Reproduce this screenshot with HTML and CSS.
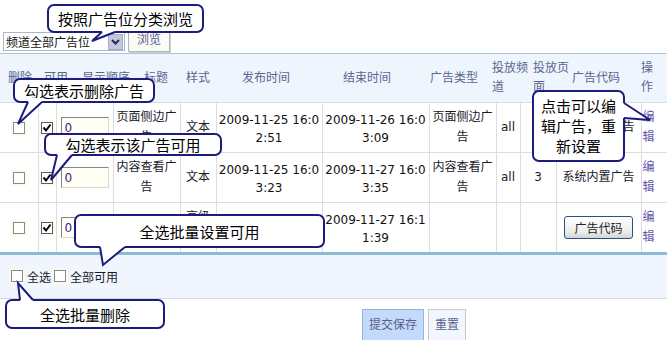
FILE: index.html
```html
<!DOCTYPE html>
<html lang="zh-CN">
<head>
    <meta charset="UTF-8">
    <meta name="viewport" content="width=device-width, initial-scale=1.0">
    <title>广告管理</title>
    <link rel="stylesheet" href="styles.css">
</head>
<body>
<div class="page">

    <!-- Filtro por posición -->
    <div class="toolbar">
        <div class="select">
            <span class="select-text">频道全部广告位</span>
            <span class="select-arrow"><svg width="9" height="6" viewBox="0 0 9 6"><polyline points="1,1 4.5,4.5 8,1" fill="none" stroke="#2a2a4a" stroke-width="2"/></svg></span>
        </div>
        <button class="btn-browse">浏览</button>
    </div>

    <!-- Cabecera de la lista -->
    <div class="list-head">
        <div>删除</div>
        <div>可用</div>
        <div>显示顺序</div>
        <div>标题</div>
        <div>样式</div>
        <div>发布时间</div>
        <div>结束时间</div>
        <div>广告类型</div>
        <div class="h-chan">投放频道</div>
        <div class="h-page">投放页面</div>
        <div>广告代码</div>
        <div class="h-op">操作</div>
    </div>

    <table class="list">
        <colgroup>
            <col style="width:38px"><col style="width:18px"><col style="width:57px"><col style="width:67px">
            <col style="width:36px"><col style="width:106px"><col style="width:107px"><col style="width:67px">
            <col style="width:24px"><col style="width:36px"><col style="width:85px"><col style="width:26px">
        </colgroup>
        <tr>
            <td><span class="cb"></span></td>
            <td><span class="cb checked"><svg width="10" height="10" viewBox="0 0 10 10"><polyline points="1.5,4.5 4,7.5 8.5,1.5" fill="none" stroke="#000" stroke-width="2"/></svg></span></td>
            <td><input class="order" value="0"></td>
            <td>页面侧边广告</td>
            <td class="style">文本</td>
            <td class="date">2009-11-25 16:02:51</td>
            <td class="date">2009-11-26 16:03:09</td>
            <td>页面侧边广告</td>
            <td>all</td>
            <td>2</td>
            <td>系统内置广告</td>
            <td class="op"><a href="#">编辑</a></td>
        </tr>
        <tr class="row2">
            <td><span class="cb"></span></td>
            <td><span class="cb checked"><svg width="10" height="10" viewBox="0 0 10 10"><polyline points="1.5,4.5 4,7.5 8.5,1.5" fill="none" stroke="#000" stroke-width="2"/></svg></span></td>
            <td><input class="order" value="0"></td>
            <td>内容查看广告</td>
            <td class="style">文本</td>
            <td class="date">2009-11-25 16:03:23</td>
            <td class="date">2009-11-27 16:03:35</td>
            <td>内容查看广告</td>
            <td>all</td>
            <td>3</td>
            <td>系统内置广告</td>
            <td class="op"><a href="#">编辑</a></td>
        </tr>
        <tr>
            <td><span class="cb"></span></td>
            <td><span class="cb checked"><svg width="10" height="10" viewBox="0 0 10 10"><polyline points="1.5,4.5 4,7.5 8.5,1.5" fill="none" stroke="#000" stroke-width="2"/></svg></span></td>
            <td><input class="order" value="0"></td>
            <td>首页广告</td>
            <td class="style">高级最新</td>
            <td class="date">2009-11-25 16:11:02</td>
            <td class="date">2009-11-27 16:11:39</td>
            <td></td>
            <td></td>
            <td></td>
            <td><button class="btn-code">广告代码</button></td>
            <td class="op"><a href="#">编辑</a></td>
        </tr>
    </table>

    <!-- Acciones en lote -->
    <div class="batch">
        <span class="cb"></span><span class="batch-label">全选</span>
        <span class="cb"></span><span class="batch-label">全部可用</span>
    </div>

    <div class="actions">
        <button class="btn-save">提交保存</button>
        <button class="btn-reset">重置</button>
    </div>

    <!-- Globos de ayuda -->
    <div class="tip tip-filter">按照广告位分类浏览
        <svg class="tail" width="1" height="1"><polygon points="55,24 55,28 45,37 68,28 68,24" fill="#fff"/><polyline points="55,28 45,37 68,28" fill="none" stroke="#1c1c7c" stroke-width="2"/></svg>
    </div>
    <div class="tip tip-del">勾选表示删除广告
        <svg class="tail" width="1" height="1"><polygon points="15,20 15,24 5,46 29,24 29,20" fill="#fff"/><polyline points="15,24 5,46 29,24" fill="none" stroke="#1c1c7c" stroke-width="2"/></svg>
    </div>
    <div class="tip tip-enable">勾选表示该广告可用
        <svg class="tail" width="1" height="1"><polygon points="13,18 13,22 7,47 28,22 28,18" fill="#fff"/><polyline points="13,22 7,47 28,22" fill="none" stroke="#1c1c7c" stroke-width="2"/></svg>
    </div>
    <div class="tip tip-allenable">全选批量设置可用
        <svg class="tail" width="1" height="1"><polygon points="26,29 26,33 29,51 51,33 51,29" fill="#fff"/><polyline points="26,33 29,51 51,33" fill="none" stroke="#1c1c7c" stroke-width="2"/></svg>
    </div>
    <div class="tip tip-alldel">全选批量删除
        <svg class="tail" width="1" height="1"><polygon points="15,5 15,1 13,-16 28,1 28,5" fill="#fff"/><polyline points="15,1 13,-16 28,1" fill="none" stroke="#1c1c7c" stroke-width="2"/></svg>
    </div>
    <div class="tip tip-edit">点击可以编辑广告，重新设置
        <svg class="tail" width="1" height="1"><polygon points="88,13 92,13 118,30 92,28 88,28" fill="#fff"/><polyline points="92,13 118,30 92,28" fill="none" stroke="#1c1c7c" stroke-width="2"/></svg>
    </div>

</div>
</body>
</html>
```

FILE: styles.css
```css
/* Estilos generales */
body, html {
    margin: 0;
    padding: 0;
    background: #fff;
}

.page {
    position: relative;
    width: 667px;
    height: 340px;
    overflow: hidden;
    font-family: "DejaVu Sans", "Noto Sans CJK SC", sans-serif;
    font-size: 12px;
    color: #222;
}

/* Barra superior */
.toolbar {
    display: flex;
    align-items: flex-start;
    height: 53px;
    padding: 32px 0 0 3px;
    box-sizing: border-box;
}

.select {
    display: flex;
    align-items: center;
    width: 122px;
    height: 19px;
    box-sizing: border-box;
    border: 1px solid #a8b8cc;
    background: #fff;
}

.select-text {
    flex: 1;
    padding-left: 2px;
    color: #111;
    font-family: "Noto Sans CJK SC", sans-serif;
    line-height: 17px;
}

.select-arrow {
    display: flex;
    align-items: center;
    justify-content: center;
    width: 15px;
    height: 16px;
    margin-right: 1px;
    background: #c3c7de;
    border: 1px solid #a6acc8;
    box-sizing: border-box;
}

.btn-browse {
    margin: -3px 0 0 3px;
    width: 42px;
    height: 23px;
    padding: 0 0 6px;
    border: 1px solid #b5b5b5;
    background: #fbfbf6;
    box-shadow: 1px 1px 0 #cfcfcf;
    font-family: "Noto Sans CJK SC", sans-serif;
    font-size: 12px;
    color: #5a5f90;
}

/* Cabecera */
.list-head {
    display: grid;
    grid-template-columns: 40px 32px 68px 32px 52px 84px 118px 56px 49px 39px 52px 45px;
    align-items: center;
    height: 50px;
    box-sizing: border-box;
    border-top: 1px solid #a9c6dc;
    border-bottom: 1px solid #d9dde8;
    background: #eff5fd;
    color: #5a6690;
    line-height: 19px;
    text-align: center;
}

.list-head .h-chan {
    text-align: left;
    padding-left: 10px;
}

.list-head .h-page {
    text-align: left;
    padding-left: 2px;
}

.list-head .h-op {
    text-align: left;
    padding: 0 12px 0 19px;
}

/* Tabla */
.list {
    width: 667px;
    table-layout: fixed;
    border-collapse: collapse;
    border-style: hidden;
}

.list td {
    height: 48.5px;
    padding: 0 2px;
    border: 1px solid #dadde8;
    text-align: center;
    vertical-align: middle;
    line-height: 20px;
    word-break: break-all;
    color: #1a1a2a;
}

.list tr.row2 td {
    height: 49.5px;
}

.list td.style {
    padding: 0;
}

.list td.date {
    height: 44.5px;
    line-height: 18px;
    padding-top: 4px;
    color: #111;
}

.list tr.row2 td.date {
    height: 45.5px;
}

.list td.op {
    text-align: left;
    padding: 0 3px 0 1px;
}

.list td.op a {
    color: #6257a8;
    text-decoration: none;
}

.cb {
    display: inline-flex;
    align-items: center;
    justify-content: center;
    width: 12px;
    height: 12px;
    box-sizing: border-box;
    border: 1px solid #8a8a8a;
    background: #fff;
    box-shadow: 0 0 0 2px #fbfbea;
    vertical-align: middle;
}

.cb.checked {
    border-color: #5c5c5c;
}

.order {
    width: 48px;
    height: 21px;
    box-sizing: border-box;
    padding: 2px 3px 0;
    border: 1px solid;
    border-color: #858585 #d8d6cc #d8d6cc #858585;
    background: #fffff3;
    font-family: "DejaVu Sans", sans-serif;
    font-size: 12px;
    color: #3b1a8c;
    vertical-align: middle;
}

.btn-code {
    width: 69px;
    height: 23px;
    padding: 0;
    border: 1px solid #2c4f86;
    border-radius: 3px;
    background: linear-gradient(#ffffff, #ececec 70%, #d4d4d4);
    font-family: "Noto Sans CJK SC", sans-serif;
    font-size: 12px;
    color: #222;
}

/* Lote */
.batch {
    display: flex;
    align-items: center;
    height: 43px;
    padding-left: 11px;
    border-top: 3px solid #8bbbd7;
    border-bottom: 1px solid #d4d8e0;
    background: #f1f6fe;
}

.batch-label {
    margin: 0 3px 0 4px;
    font-family: "Noto Sans CJK SC", sans-serif;
    color: #1a1a2a;
}

.actions {
    display: flex;
    gap: 4px;
    padding: 10px 0 0 362px;
}

.btn-save,
.btn-reset {
    height: 35px;
    padding: 0 6px 3px;
    border: 1px solid #8bbbd7;
    border-bottom-width: 4px;
    font-family: "Noto Sans CJK SC", sans-serif;
    font-size: 12px;
    color: #5a5f90;
}

.btn-save {
    background: #c5dafb;
}

.btn-reset {
    background: #f2f6fe;
    border-color: #c8c8c8;
}

/* Globos */
.tip {
    position: absolute;
    display: flex;
    align-items: center;
    justify-content: center;
    box-sizing: border-box;
    border: 2px solid #1c1c7c;
    border-radius: 7px;
    background: #fff;
    font-family: "Noto Sans CJK SC", sans-serif;
    font-size: 15px;
    color: #000;
    z-index: 5;
}

.tip .tail {
    position: absolute;
    left: -2px;
    top: -2px;
    overflow: visible;
}

.tip-filter {
    left: 47px;
    top: 4px;
    width: 157px;
    height: 29px;
}

.tip-del {
    left: 13px;
    top: 78px;
    width: 142px;
    height: 25px;
}

.tip-enable {
    left: 44px;
    top: 133px;
    width: 178px;
    height: 23px;
}

.tip-allenable {
    left: 74px;
    top: 214px;
    width: 251px;
    height: 34px;
}

.tip-alldel {
    left: 5px;
    top: 299px;
    width: 160px;
    height: 30px;
}

.tip-edit {
    left: 532px;
    top: 90px;
    width: 93px;
    height: 72px;
    padding: 0 6px;
    line-height: 20px;
    text-align: center;
}
```
